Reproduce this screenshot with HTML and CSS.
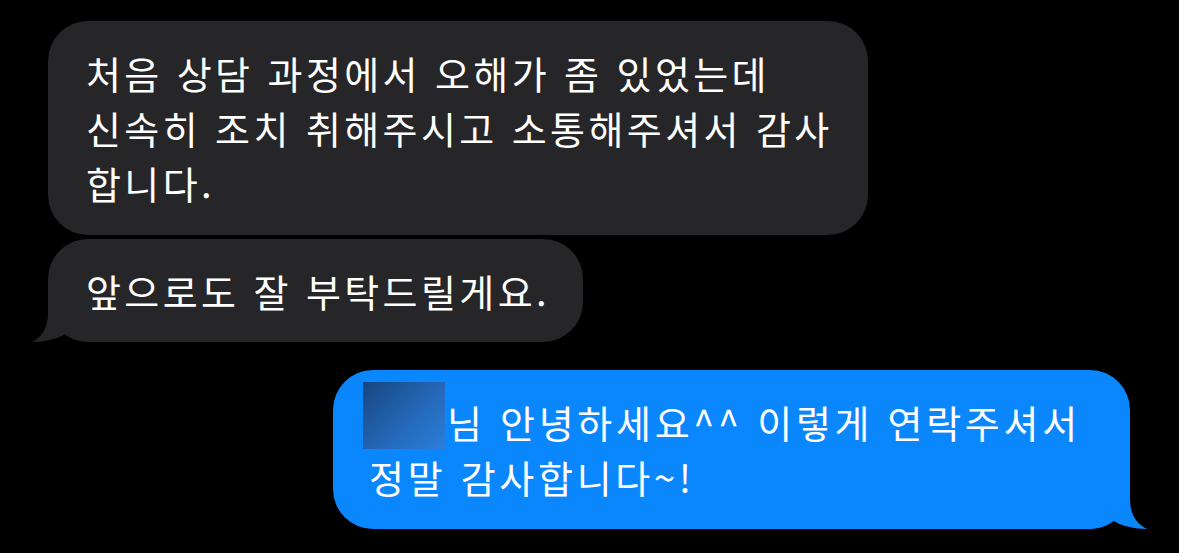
FILE: index.html
```html
<!DOCTYPE html>
<html lang="ko">

<head>
    <meta charset="UTF-8" />
    <meta name="viewport" content="width=device-width, initial-scale=1.0" />
    <title>메시지</title>
    <link rel="stylesheet" href="styles.css">
</head>

<body>
    <div class="thread">
        <div class="bubble received first">
            처음 상담 과정에서 오해가 좀 있었는데<br>
            신속히 조치 취해주시고 소통해주셔서 감사<br>
            합니다.
        </div>

        <div class="bubble received second">
            앞으로도 잘 부탁드릴게요.
            <svg class="tail tail-left" viewBox="0 0 60 50" aria-hidden="true">
                <path d="M20 0 L16 8 L16 20 C16 36 10 45 0 50 C12 50 26 47 35 41 C43 47 52 50 60 50 L60 0 Z" />
            </svg>
        </div>

        <div class="bubble sent">
            <span class="redacted"></span>님 안녕하세요^^ 이렇게 연락주셔서<br>
            정말 감사합니다~!
            <svg class="tail tail-right" viewBox="0 0 60 50" aria-hidden="true">
                <path d="M39 0 L43 8 L43 20 C43 36 50 45 60 50 C48 50 34 47 25 41 C17 47 8 50 0 50 L0 0 Z" />
            </svg>
        </div>
    </div>
</body>

</html>
```

FILE: styles.css
```css
body {
    margin: 0;
    background-color: #000000;
    font-family: "Noto Sans CJK KR", "Noto Sans", sans-serif;
}

.thread {
    display: flex;
    flex-direction: column;
    gap: 4px;
    padding: 21px 49px 0 48px;
}

.bubble {
    position: relative;
    box-sizing: border-box;
    padding: 24px 30px 24px 38px;
    border-radius: 40px;
    color: #FFFFFF;
    font-size: 38px;
    line-height: 55px;
    letter-spacing: 3.4px;
    white-space: nowrap;
}

.received {
    background-color: #262628;
    align-self: flex-start;
}

.first {
    width: 820px;
    height: 214px;
}

.second {
    width: 535px;
    height: 103px;
}

.sent {
    background-color: #0B87FE;
    align-self: flex-end;
    width: 797px;
    height: 159px;
    margin-top: 24px;
    padding-left: 36px;
    letter-spacing: 3.7px;
}

.redacted {
    display: inline-block;
    width: 82px;
    height: 67px;
    margin: -12px 2px 0 -6px;
    vertical-align: bottom;
    background: linear-gradient(135deg, #17467F 0%, #2467B8 55%, #2C7EDB 100%);
}

.tail {
    position: absolute;
    bottom: 0;
    width: 60px;
    height: 50px;
}

.tail-left {
    left: -16px;
    fill: #262628;
}

.tail-right {
    right: -17px;
    fill: #0B87FE;
}
```
